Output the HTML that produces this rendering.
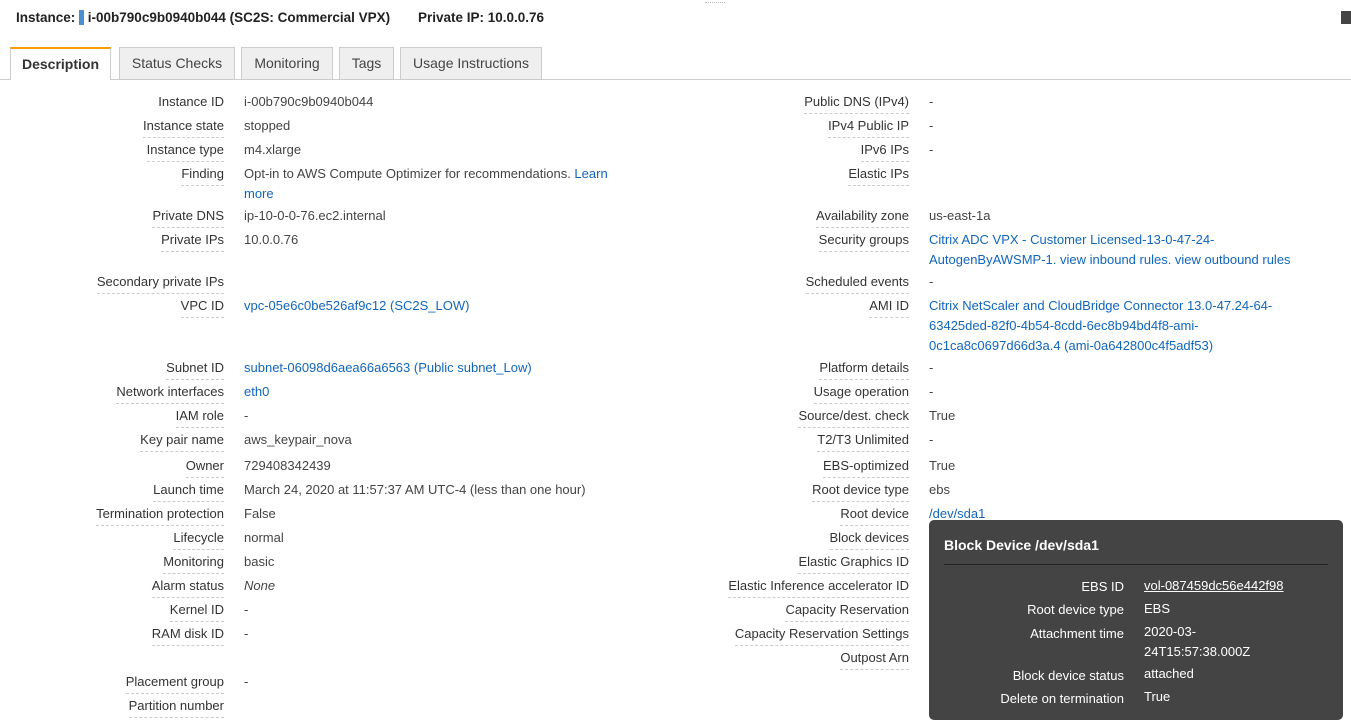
<!DOCTYPE html>
<html><head><meta charset="utf-8"><style>
body{margin:0;width:1351px;height:711px;overflow:hidden;background:#fff;font-family:"Liberation Sans",Arial,sans-serif;font-size:13px;color:#444;position:relative}
.a{position:absolute;white-space:nowrap;line-height:16px}
.l{position:absolute;white-space:nowrap;line-height:16px;color:#333;border-bottom:1px dashed #ccc;padding-bottom:3px;margin-top:1px}
.L{right:1127px}.R{right:442px}
.v{position:absolute;white-space:nowrap;line-height:20px;left:244px;margin-top:1px}
.w{position:absolute;white-space:nowrap;line-height:20px;left:929px;margin-top:1px}
.k{color:#1166bb}
.tab{position:absolute;top:47px;height:32px;border:1px solid #ccc;border-bottom:none;background:#efefef;font-size:14px;color:#444;line-height:31px;text-align:center;box-sizing:border-box}
.pl{position:absolute;right:227px;color:#fff;white-space:nowrap;line-height:16px}
.pv{position:absolute;left:1144px;color:#fff;white-space:nowrap;line-height:20px}
</style></head><body>
<div class="a" style="left:16px;top:10px;font-weight:bold;font-size:13.5px;color:#222">Instance: <span style="display:inline-block;width:5px;height:15px;background:#4a90d0;vertical-align:-3px"></span> i-00b790c9b0940b044 (SC2S: Commercial VPX) <span style="margin-left:24px">Private IP: 10.0.0.76</span></div>
<div style="position:absolute;left:705px;top:2px;width:20px;height:3px;border-top:1px dotted #bbb"></div>
<div style="position:absolute;left:1341px;top:11px;width:10px;height:13px;background:#444;border-bottom:2px solid #fff"></div>
<div style="position:absolute;left:1341px;top:22px;width:10px;height:2px;background:#444"></div>
<div style="position:absolute;left:0;top:79px;width:1351px;height:1px;background:#ccc"></div>
<div class="tab" style="left:10px;width:101px;height:33px;background:#fff;border-top:2px solid #f90;font-weight:bold;color:#333">Description</div>
<div class="tab" style="left:119px;width:116px">Status Checks</div>
<div class="tab" style="left:241px;width:92px">Monitoring</div>
<div class="tab" style="left:339px;width:55px">Tags</div>
<div class="tab" style="left:400px;width:142px">Usage Instructions</div>

<div class="l L" style="top:93px;border:none">Instance ID</div><div class="v" style="top:91px">i-00b790c9b0940b044</div>
<div class="l L" style="top:117px">Instance state</div><div class="v" style="top:115px">stopped</div>
<div class="l L" style="top:141px">Instance type</div><div class="v" style="top:139px">m4.xlarge</div>
<div class="l L" style="top:165px">Finding</div><div class="v" style="top:163px">Opt-in to AWS Compute Optimizer for recommendations. <span class="k">Learn</span><br><span class="k">more</span></div>
<div class="l L" style="top:207px">Private DNS</div><div class="v" style="top:205px">ip-10-0-0-76.ec2.internal</div>
<div class="l L" style="top:231px">Private IPs</div><div class="v" style="top:229px">10.0.0.76</div>
<div class="l L" style="top:273px">Secondary private IPs</div>
<div class="l L" style="top:297px">VPC ID</div><div class="v k" style="top:295px">vpc-05e6c0be526af9c12 (SC2S_LOW)</div>
<div class="l L" style="top:359px">Subnet ID</div><div class="v k" style="top:357px">subnet-06098d6aea66a6563 (Public subnet_Low)</div>
<div class="l L" style="top:383px">Network interfaces</div><div class="v k" style="top:381px">eth0</div>
<div class="l L" style="top:407px">IAM role</div><div class="v" style="top:405px">-</div>
<div class="l L" style="top:431px">Key pair name</div><div class="v" style="top:429px">aws_keypair_nova</div>
<div class="l L" style="top:457px">Owner</div><div class="v" style="top:455px">729408342439</div>
<div class="l L" style="top:481px">Launch time</div><div class="v" style="top:479px">March 24, 2020 at 11:57:37 AM UTC-4 (less than one hour)</div>
<div class="l L" style="top:505px">Termination protection</div><div class="v" style="top:503px">False</div>
<div class="l L" style="top:529px">Lifecycle</div><div class="v" style="top:527px">normal</div>
<div class="l L" style="top:553px">Monitoring</div><div class="v" style="top:551px">basic</div>
<div class="l L" style="top:577px">Alarm status</div><div class="v" style="top:575px;font-style:italic">None</div>
<div class="l L" style="top:601px">Kernel ID</div><div class="v" style="top:599px">-</div>
<div class="l L" style="top:625px">RAM disk ID</div><div class="v" style="top:623px">-</div>
<div class="l L" style="top:673px">Placement group</div><div class="v" style="top:671px">-</div>
<div class="l L" style="top:697px">Partition number</div>

<div class="l R" style="top:93px">Public DNS (IPv4)</div><div class="w" style="top:91px">-</div>
<div class="l R" style="top:117px">IPv4 Public IP</div><div class="w" style="top:115px">-</div>
<div class="l R" style="top:141px">IPv6 IPs</div><div class="w" style="top:139px">-</div>
<div class="l R" style="top:165px">Elastic IPs</div>
<div class="l R" style="top:207px">Availability zone</div><div class="w" style="top:205px">us-east-1a</div>
<div class="l R" style="top:231px">Security groups</div><div class="w k" style="top:229px">Citrix ADC VPX - Customer Licensed-13-0-47-24-<br>AutogenByAWSMP-1. view inbound rules. view outbound rules</div>
<div class="l R" style="top:273px">Scheduled events</div><div class="w" style="top:271px">-</div>
<div class="l R" style="top:297px">AMI ID</div><div class="w k" style="top:295px">Citrix NetScaler and CloudBridge Connector 13.0-47.24-64-<br>63425ded-82f0-4b54-8cdd-6ec8b94bd4f8-ami-<br>0c1ca8c0697d66d3a.4 (ami-0a642800c4f5adf53)</div>
<div class="l R" style="top:359px">Platform details</div><div class="w" style="top:357px">-</div>
<div class="l R" style="top:383px">Usage operation</div><div class="w" style="top:381px">-</div>
<div class="l R" style="top:407px">Source/dest. check</div><div class="w" style="top:405px">True</div>
<div class="l R" style="top:431px">T2/T3 Unlimited</div><div class="w" style="top:429px">-</div>
<div class="l R" style="top:457px">EBS-optimized</div><div class="w" style="top:455px">True</div>
<div class="l R" style="top:481px">Root device type</div><div class="w" style="top:479px">ebs</div>
<div class="l R" style="top:505px">Root device</div><div class="w k" style="top:503px">/dev/sda1</div>
<div class="l R" style="top:529px">Block devices</div>
<div class="l R" style="top:553px">Elastic Graphics ID</div>
<div class="l R" style="top:577px">Elastic Inference accelerator ID</div>
<div class="l R" style="top:601px">Capacity Reservation</div>
<div class="l R" style="top:625px">Capacity Reservation Settings</div>
<div class="l R" style="top:649px">Outpost Arn</div>

<div style="position:absolute;left:929px;top:520px;width:414px;height:200px;background:#444;border-radius:5px"></div>
<div class="a" style="left:944px;top:537px;color:#fff;font-weight:bold;font-size:14px">Block Device /dev/sda1</div>
<div style="position:absolute;left:944px;top:564px;width:384px;height:1px;background:#222"></div>
<div class="pl" style="top:579px">EBS ID</div><div class="pv" style="top:576px;text-decoration:underline">vol-087459dc56e442f98</div>
<div class="pl" style="top:602px">Root device type</div><div class="pv" style="top:599px">EBS</div>
<div class="pl" style="top:626px">Attachment time</div><div class="pv" style="top:622px">2020-03-<br>24T15:57:38.000Z</div>
<div class="pl" style="top:668px">Block device status</div><div class="pv" style="top:664px">attached</div>
<div class="pl" style="top:691px">Delete on termination</div><div class="pv" style="top:687px">True</div>
</body></html>
